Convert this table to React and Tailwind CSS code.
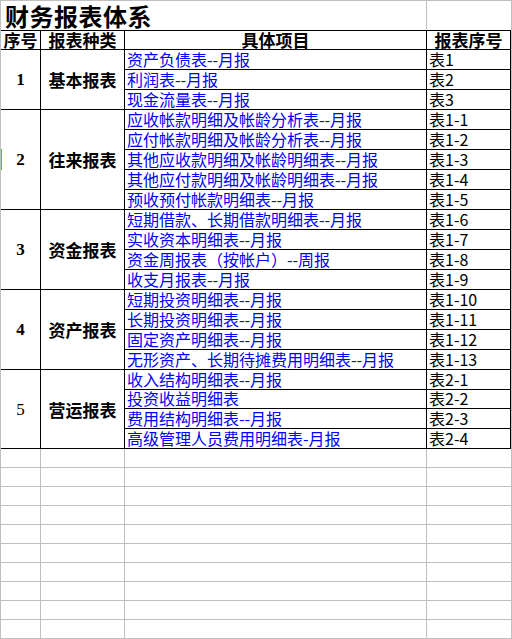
import React from "react";

const sections = [
  {
    no: "1",
    boldNo: true,
    name: "基本报表",
    items: [
      ["资产负债表--月报", "表1"],
      ["利润表--月报", "表2"],
      ["现金流量表--月报", "表3"],
    ],
  },
  {
    no: "2",
    boldNo: true,
    name: "往来报表",
    items: [
      ["应收帐款明细及帐龄分析表--月报", "表1-1"],
      ["应付帐款明细及帐龄分析表--月报", "表1-2"],
      ["其他应收款明细及帐龄明细表--月报", "表1-3"],
      ["其他应付款明细及帐龄明细表--月报", "表1-4"],
      ["预收预付帐款明细表--月报", "表1-5"],
    ],
  },
  {
    no: "3",
    boldNo: true,
    name: "资金报表",
    items: [
      ["短期借款、长期借款明细表--月报", "表1-6"],
      ["实收资本明细表--月报", "表1-7"],
      ["资金周报表（按帐户）--周报", "表1-8"],
      ["收支月报表--月报", "表1-9"],
    ],
  },
  {
    no: "4",
    boldNo: true,
    name: "资产报表",
    items: [
      ["短期投资明细表--月报", "表1-10"],
      ["长期投资明细表--月报", "表1-11"],
      ["固定资产明细表--月报", "表1-12"],
      ["无形资产、长期待摊费用明细表--月报", "表1-13"],
    ],
  },
  {
    no: "5",
    boldNo: false,
    name: "营运报表",
    items: [
      ["收入结构明细表--月报", "表2-1"],
      ["投资收益明细表", "表2-2", true],
      ["费用结构明细表--月报", "表2-3"],
      ["高级管理人员费用明细表-月报", "表2-4"],
    ],
  },
];

const cellFont = "font-['Noto_Sans_CJK_SC',sans-serif] text-[16px] leading-[16px]";
const boldFont = "font-['Noto_Sans_CJK_SC',sans-serif] font-bold";

function Section({ s }) {
  const n = s.items.length;
  return (
    <div className="flex border-b border-black">
      <div className="w-[40px] border-r border-black flex items-center justify-center">
        <span
          className={
            s.boldNo
              ? "font-['Liberation_Serif',serif] font-bold text-[17px] leading-[17px] text-black"
              : "font-['Liberation_Serif',serif] text-[17px] leading-[17px] text-black"
          }
        >
          {s.no}
        </span>
      </div>
      <div className="w-[84px] border-r border-black flex items-center justify-center">
        <span className={boldFont + " text-[17px] leading-[17px] text-black"}>{s.name}</span>
      </div>
      <div className="flex flex-col">
        {s.items.map((it, i) => {
          const last = i === n - 1;
          const short = it[2];
          const h = last ? (short ? "h-[18px]" : "h-[19px]") : short ? "h-[19px]" : "h-[20px]";
          return (
            <div
              key={i}
              className={(last ? "" : "border-b border-black ") + "flex " + h}
            >
              <div className="w-[302px] border-r border-black flex items-center pl-[2px] pb-[2px]">
                <span className={cellFont + " text-[#0000ff] whitespace-nowrap"}>{it[0]}</span>
              </div>
              <div className="w-[84px] border-r border-black flex items-center pl-[2px] pb-[2px]">
                <span className={cellFont + " text-black whitespace-nowrap"}>{it[1]}</span>
              </div>
            </div>
          );
        })}
      </div>
    </div>
  );
}

export default function App() {
  const empties = Array.from({ length: 10 });
  return (
    <div className="relative w-[512px] h-[639px] overflow-hidden bg-white border-l border-r border-[#c0c0c0]">
      {/* title row */}
      <div className="flex h-[30px] border-t border-[#c0c0c0]">
        <div className="w-[425px] flex items-center pl-[4px] pt-[1px]">
          <span className={boldFont + " text-[24px] leading-[24px] text-black tracking-[0.5px]"}>财务报表体系</span>
        </div>
        <div className="w-[85px] border-l border-[#c0c0c0]"></div>
      </div>
      {/* header row */}
      <div className="flex h-[20px] border-t border-b border-black">
        <div className="w-[40px] border-r border-black flex items-center justify-center pb-[1px]">
          <span className={boldFont + " text-[17px] leading-[17px] text-black"}>序号</span>
        </div>
        <div className="w-[84px] border-r border-black flex items-center justify-center pb-[1px]">
          <span className={boldFont + " text-[17px] leading-[17px] text-black"}>报表种类</span>
        </div>
        <div className="w-[302px] border-r border-black flex items-center justify-center pb-[1px]">
          <span className={boldFont + " text-[17px] leading-[17px] text-black"}>具体项目</span>
        </div>
        <div className="w-[84px] border-r border-black flex items-center justify-center pb-[1px]">
          <span className={boldFont + " text-[17px] leading-[17px] text-black"}>报表序号</span>
        </div>
      </div>
      {sections.map((s) => (
        <Section key={s.no} s={s} />
      ))}
      {empties.map((_, i) => (
        <div key={i} className="flex h-[19px] border-b border-[#c0c0c0]">
          <div className="w-[40px] border-r border-[#c0c0c0]"></div>
          <div className="w-[84px] border-r border-[#c0c0c0]"></div>
          <div className="w-[302px] border-r border-[#c0c0c0]"></div>
          <div className="w-[84px]"></div>
        </div>
      ))}
      {/* selected-row marker */}
      <div className="absolute left-[-1px] top-[149px] w-[2px] h-[21px] bg-[#6aaf4e]"></div>
    </div>
  );
}
